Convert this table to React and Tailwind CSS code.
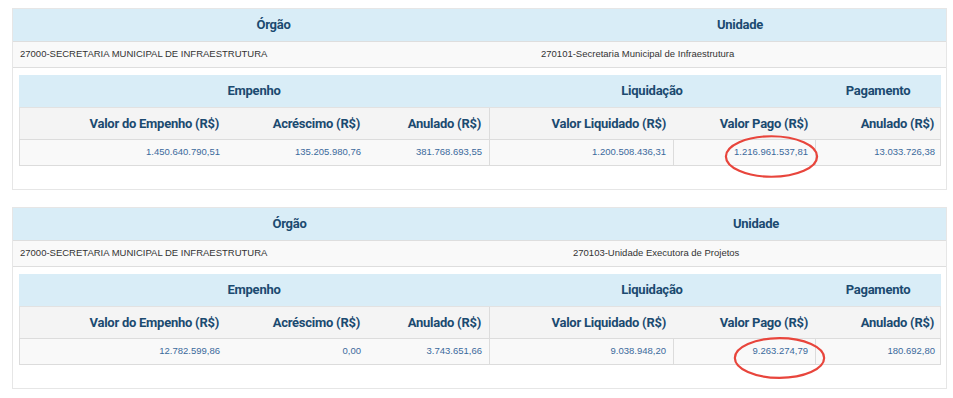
import React from 'react';

const head = "font-['Roboto',sans-serif] font-bold text-[13px] tracking-[-0.25px] text-[#1b4a70]";
const cell = "font-['Liberation_Sans',Arial,sans-serif] text-[9.5px]";

const cards = [
  {
    orgao: '27000-SECRETARIA MUNICIPAL DE INFRAESTRUTURA',
    unidade: '270101-Secretaria Municipal de Infraestrutura',
    cols: 'grid-cols-[521px_1fr]',
    valores: ['1.450.640.790,51', '135.205.980,76', '381.768.693,55', '1.200.508.436,31', '1.216.961.537,81', '13.033.726,38'],
    ring: 'left-[50px] top-[-6px] w-[95px] h-[45px]',
  },
  {
    orgao: '27000-SECRETARIA MUNICIPAL DE INFRAESTRUTURA',
    unidade: '270103-Unidade Executora de Projetos',
    cols: 'grid-cols-[553px_1fr]',
    valores: ['12.782.599,86', '0,00', '3.743.651,66', '9.038.948,20', '9.263.274,79', '180.692,80'],
    ring: 'left-[59px] top-[-3px] w-[93px] h-[44px]',
  },
];

const colunas = ['Valor do Empenho (R$)', 'Acréscimo (R$)', 'Anulado (R$)', 'Valor Liquidado (R$)', 'Valor Pago (R$)', 'Anulado (R$)'];
const grid = 'grid grid-cols-[207px_141px_122px_184px_142px_126px]';

// borda direita só no fim de cada grupo / coluna com divisória
const divHead = ['', '', 'border-r border-[#dcdcdc]', '', '', ''];
const divData = ['', '', 'border-r border-[#dcdcdc]', 'border-r border-[#dcdcdc]', 'border-r border-[#dcdcdc]', ''];

const Card = ({ data }) => (
  <div className="w-[935px] border border-[#e6e6e6] bg-white">
    <div className={`grid ${data.cols} h-8 bg-[#d9edf7] items-center`}>
      <div className={`${head} text-center`}>Órgão</div>
      <div className={`${head} text-center`}>Unidade</div>
    </div>
    <div className={`grid ${data.cols} h-[27px] items-center bg-[#f9f9f9] border-t border-b border-[#dedede] text-[#333]`}>
      <div className={`${cell} pl-[7px]`}>{data.orgao}</div>
      <div className={`${cell} pl-[7px]`}>{data.unidade}</div>
    </div>

    <div className="pt-[7px] pl-[6px] pr-[5px] pb-[23px]">
      <div className={`${grid} h-8 bg-[#d9edf7] items-center`}>
        <div className={`${head} col-span-3 text-center`}>Empenho</div>
        <div className={`${head} col-span-2 text-center`}>Liquidação</div>
        <div className={`${head} text-center`}>Pagamento</div>
      </div>
      <div className={`${grid} h-8 bg-[#f4f4f4] border-l border-r border-t border-[#e2e2e2]`}>
        {colunas.map((c, i) => (
          <div key={i} className={`${head} flex items-center justify-end pr-2 ${divHead[i]}`}>{c}</div>
        ))}
      </div>
      <div className={`${grid} h-[27px] bg-[#f9f9f9] border border-[#dcdcdc]`}>
        {data.valores.map((v, i) => (
          <div key={i} className={`${cell} relative flex items-center justify-end pr-[7px] text-[#3b6a9c] ${divData[i]}`}>
            {v}
            {i === 4 && (
              <svg className={`absolute ${data.ring} pointer-events-none`} viewBox="0 0 100 50" preserveAspectRatio="none">
                <ellipse cx="50" cy="25" rx="48" ry="22.5" fill="none" stroke="#e8453c" strokeWidth="2.2" vectorEffect="non-scaling-stroke" />
              </svg>
            )}
          </div>
        ))}
      </div>
    </div>
  </div>
);

export default function App() {
  return (
    <div className="min-h-screen bg-white pt-2 pl-3">
      <div className="flex flex-col gap-[17px]">
        {cards.map((c, i) => (
          <Card key={i} data={c} />
        ))}
      </div>
    </div>
  );
}
